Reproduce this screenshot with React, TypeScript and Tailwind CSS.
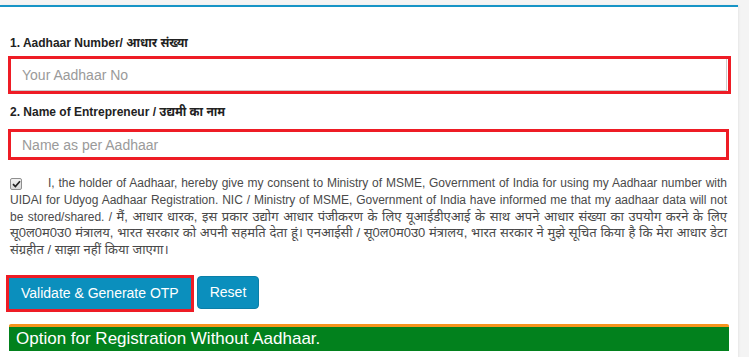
import React from "react";

const font = { fontFamily: '"Liberation Sans", Arial, "Noto Sans", sans-serif' };

const CheckBox = () => (
  <span className="inline-flex items-center justify-center w-[12px] h-[12px] border border-[#8f8f8f] rounded-[2px] bg-gradient-to-b from-[#f2f2f2] to-[#d8d8d8] align-[-1px]">
    <svg width="9" height="8" viewBox="0 0 9 8">
      <path d="M1 4.2 L3.4 6.6 L8 1.2" fill="none" stroke="#222" strokeWidth="1.7" />
    </svg>
  </span>
);

export default function App() {
  return (
    <div
      className="w-[749px] h-[357px] overflow-hidden bg-[#f4f4f4] pt-[5px]"
      style={font}
    >
      <div className="w-[738px] h-[400px] bg-white border-t-2 border-[#1794c6] shadow-[1px_0_2px_rgba(0,0,0,0.06)] pl-[8px] pr-[9px] pt-[28px]">
        <label className="block text-[12px] leading-[17px] font-bold text-[#222] pl-[2px]">
          1. Aadhaar Number/ आधार संख्या
        </label>
        <div className="mt-[4px] w-[723px] border-[3px] border-[#ee1c25]">
          <input
            className="block w-[716px] h-[32px] border-r border-b border-[#cccccc] pl-[11px] text-[14px] text-[#555] placeholder:text-[#9a9a9a] outline-none"
            placeholder="Your Aadhaar No"
          />
        </div>

        <label className="block mt-[10px] text-[12px] leading-[17px] font-bold text-[#222] pl-[2px]">
          2. Name of Entrepreneur / उद्यमी का नाम
        </label>
        <div className="mt-[8px] w-[721px] border-[3px] border-[#ee1c25]">
          <input
            className="block w-full h-[25px] pl-[11px] text-[14px] text-[#555] placeholder:text-[#9a9a9a] outline-none"
            placeholder="Name as per Aadhaar"
          />
        </div>

        <p className="mt-[15px] pl-[2px] pr-[2px] text-[12px] leading-[16.8px] text-[#4a4a4a] text-justify">
          <CheckBox />
          <span className="inline-block w-[26px]" />
          I, the holder of Aadhaar, hereby give my consent to Ministry of MSME,
          Government of India for using my Aadhaar number with UIDAI for Udyog
          Aadhaar Registration. NIC / Ministry of MSME, Government of India have
          informed me that my aadhaar data will not be stored/shared. /{" "}
          <span className="text-[13px] leading-[16px]">
            मैं, आधार धारक, इस प्रकार उद्योग आधार पंजीकरण के लिए यूआईडीएआई के
            साथ अपने आधार संख्या का उपयोग करने के लिए सू0ल0म0उ0 मंत्रालय, भारत
            सरकार को अपनी सहमति देता हूं। एनआईसी / सू0ल0म0उ0 मंत्रालय, भारत
            सरकार ने मुझे सूचित किया है कि मेरा आधार डेटा संग्रहीत / साझा नहीं
            किया जाएगा।
          </span>
        </p>

        <div className="mt-[16px] flex items-start gap-[3px] -ml-[2px]">
          <button className="h-[37px] px-[12px] border-[3px] border-[#ee1c25] bg-[#0b8fbd] text-white text-[14px] leading-[19px]">
            Validate &amp; Generate OTP
          </button>
          <button className="mt-[1px] h-[33px] px-[12px] border border-[#0a7fa8] rounded-[4px] bg-[#0b8fbd] text-white text-[14px] leading-[19px]">
            Reset
          </button>
        </div>

        <div className="mt-[12px] ml-[1px] w-[720px] border-t-[3px] border-[#f7941d] rounded-t-[2px] bg-[#02811d] h-[27px] pl-[7px] text-white text-[17px] leading-[24px]">
          Option for Registration Without Aadhaar.
        </div>
      </div>
    </div>
  );
}
